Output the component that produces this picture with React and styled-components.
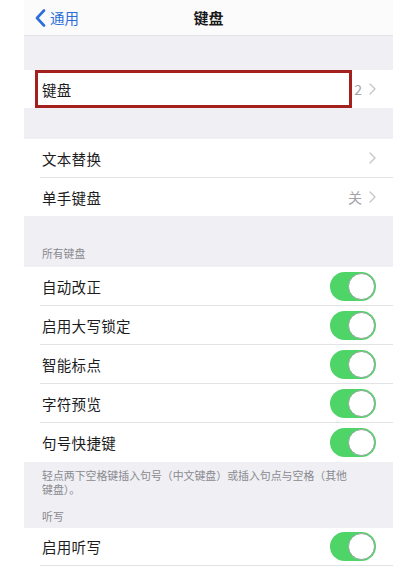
import React from "react";
import styled, { createGlobalStyle } from "styled-components";

const Global = createGlobalStyle`
  html, body { margin: 0; padding: 0; background: #ffffff; }
  body { font-family: "Noto Sans CJK SC", "Noto Sans", sans-serif; -webkit-font-smoothing: antialiased; }
`;

const Page = styled.div`
  width: 369px;
  margin-left: 24px;
  background: #efeff4;
  height: 570px;
  overflow: hidden;
`;

const NavBar = styled.div`
  height: 35px;
  border-bottom: 1px solid #e4e4e8;
  display: grid;
  grid-template-columns: 1fr auto 1fr;
  align-items: center;
  margin-left: -24px;
  margin-right: -24px;
  padding: 0 35px;
  background: #fbfbfb;
`;

const Back = styled.div`
  display: flex;
  align-items: center;
  gap: 4px;
  color: #2d6ed8;
  font-size: 14.5px;
`;

const Title = styled.div`
  font-size: 15px;
  font-weight: 700;
  color: #1a1a1a;
`;

const Spacer = styled.div`
  height: ${(p) => p.h}px;
`;

const Group = styled.div`
  background: #ffffff;
  position: relative;
`;

const Row = styled.div`
  height: ${(p) => p.h || 39}px;
  padding-left: 16px;
  display: flex;
  background: #ffffff;
`;

const RowInner = styled.div`
  flex: 1;
  display: flex;
  align-items: center;
  padding-left: 2px;
  padding-right: 17px;
  border-bottom: ${(p) => (p.last ? "none" : "1px solid #e3e3e6")};
`;

const Label = styled.div`
  flex: 1;
  font-size: 14.5px;
  color: #1c1c1e;
  letter-spacing: 0.3px;
`;

const Value = styled.span`
  font-size: 14px;
  color: #a3a3a8;
  margin-right: 7px;
`;

const SectionHeader = styled.div`
  padding: 30px 0 7px 18px;
  font-size: 10.8px;
  line-height: 14px;
  color: #8a8a8f;
`;

const Footer = styled.div`
  padding: 6px 0 5px 18px;
  font-size: 10.9px;
  line-height: 14px;
  color: #8a8a8f;
`;

const FooterText = styled.div`
  max-width: 312px;
`;

const FooterHeader = styled.div`
  margin-top: 13px;
`;

const Highlight = styled.div`
  position: absolute;
  left: 11px;
  top: 0;
  width: 317px;
  height: 38px;
  box-sizing: border-box;
  border: 3px solid #a3201d;
  pointer-events: none;
`;

const Track = styled.div`
  width: 46px;
  height: 29px;
  border-radius: 15px;
  background: #4fd468;
  display: flex;
  align-items: center;
  justify-content: flex-end;
  padding: 1px;
  box-sizing: border-box;
`;

const Knob = styled.div`
  width: 27px;
  height: 27px;
  border-radius: 50%;
  background: #ffffff;
  box-sizing: border-box;
  border: 1.5px solid #8ea597;
`;

const Chevron = () => (
  <svg width="7" height="12" viewBox="0 0 7 12">
    <path d="M1 1 L6 6 L1 11" fill="none" stroke="#c4c4c9" strokeWidth="1.3" strokeLinecap="round" strokeLinejoin="round" />
  </svg>
);

const BackChevron = () => (
  <svg width="11" height="18" viewBox="0 0 11 18">
    <path d="M9 1.5 L2 9 L9 16.5" fill="none" stroke="#2d6ed8" strokeWidth="2.6" strokeLinecap="round" strokeLinejoin="round" />
  </svg>
);

const Toggle = () => (
  <Track>
    <Knob />
  </Track>
);

const toggles = ["自动改正", "启用大写锁定", "智能标点", "字符预览", "句号快捷键"];

export default function App() {
  return (
    <>
      <Global />
      <Page>
        <NavBar>
          <Back>
            <BackChevron />
            <span>通用</span>
          </Back>
          <Title>键盘</Title>
          <div />
        </NavBar>
        <Spacer h={34} />
        <Group>
          <Row h={38}>
            <RowInner last>
              <Label>键盘</Label>
              <Value>2</Value>
              <Chevron />
            </RowInner>
          </Row>
          <Highlight />
        </Group>
        <Spacer h={31} />
        <Group>
          <Row>
            <RowInner>
              <Label>文本替换</Label>
              <Chevron />
            </RowInner>
          </Row>
          <Row h={38}>
            <RowInner last>
              <Label>单手键盘</Label>
              <Value>关</Value>
              <Chevron />
            </RowInner>
          </Row>
        </Group>
        <SectionHeader>所有键盘</SectionHeader>
        <Group>
          {toggles.map((t, i) => (
            <Row key={t}>
              <RowInner last={i === toggles.length - 1}>
                <Label>{t}</Label>
                <Toggle />
              </RowInner>
            </Row>
          ))}
        </Group>
        <Footer>
          <FooterText>轻点两下空格键插入句号（中文键盘）或插入句点与空格（其他键盘）。</FooterText>
          <FooterHeader>听写</FooterHeader>
        </Footer>
        <Group>
          <Row h={38}>
            <RowInner>
              <Label>启用听写</Label>
              <Toggle />
            </RowInner>
          </Row>
          <Row />
        </Group>
      </Page>
    </>
  );
}
